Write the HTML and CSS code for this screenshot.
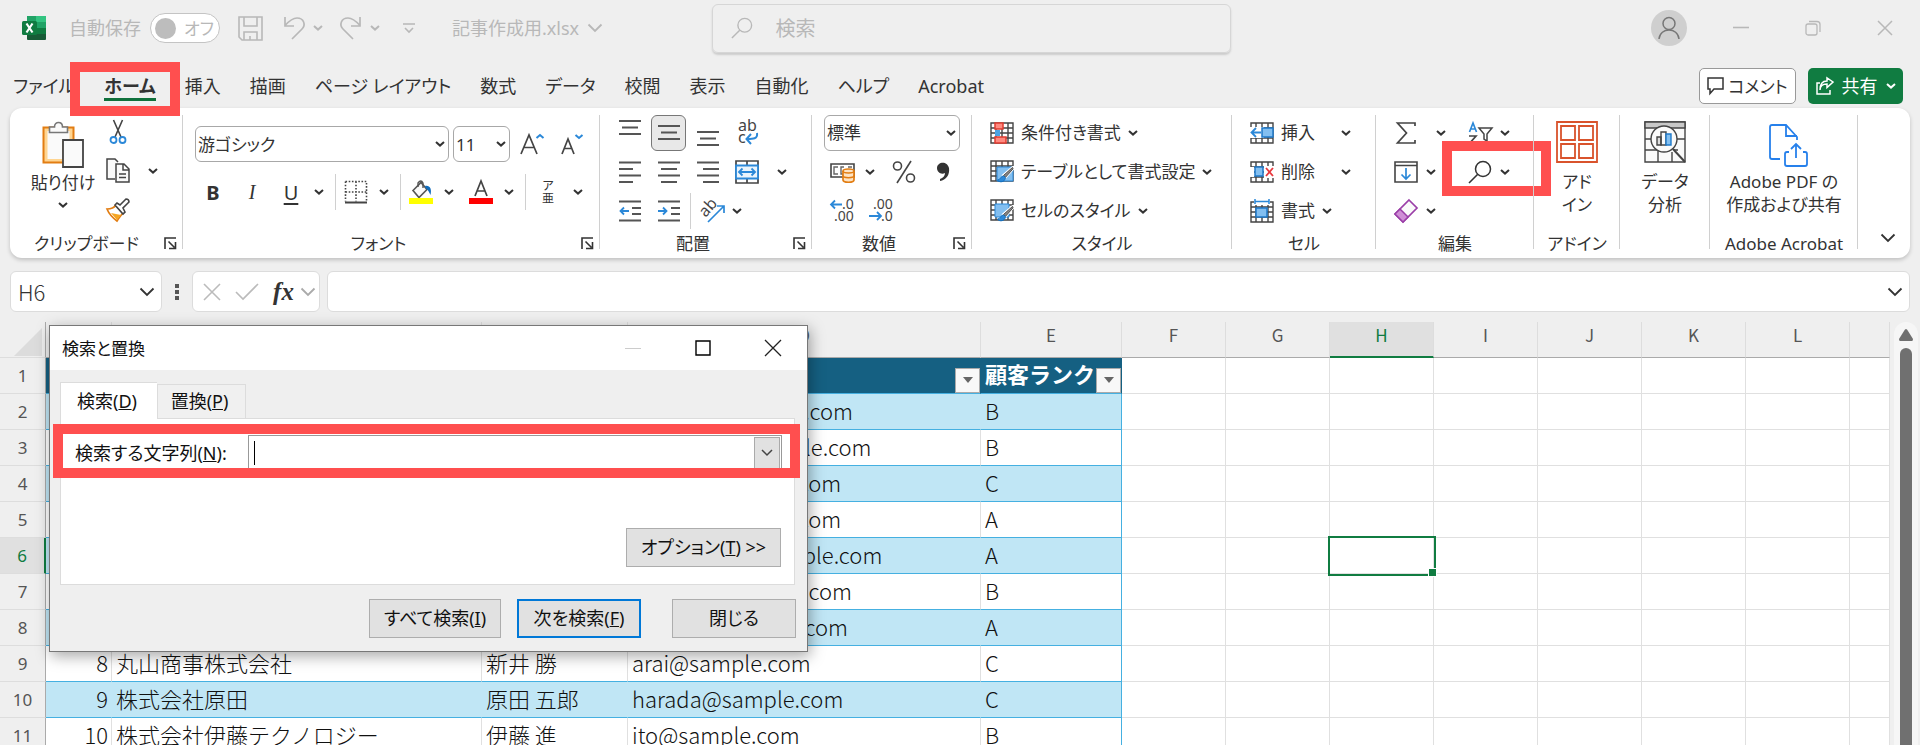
FILE: index.html
```html
<!DOCTYPE html>
<html lang="ja">
<head>
  <meta charset="UTF-8">
  <meta name="viewport" content="width=device-width, initial-scale=1.0">
  <title>記事作成用.xlsx</title>
  <link rel="stylesheet" href="styles.css">
</head>
<body>

  <!-- Shared icons -->
  <svg class="sprite" width="0" height="0">
    <symbol id="chev" viewBox="0 0 10 6"><path d="M1 1l4 3.6L9 1" fill="none" stroke="currentColor" stroke-width="2"/></symbol>
    <symbol id="chev-lg" viewBox="0 0 16 10"><path d="M1.5 1.5L8 8l6.500-6.500" fill="none" stroke="currentColor" stroke-width="1.800"/></symbol>
    <symbol id="launcher" viewBox="0 0 13 13"><path d="M1 12V1h11M4.500 4.500l6 6M11.500 5v6.500H5" fill="none" stroke="#333" stroke-width="1.600"/></symbol>
    <symbol id="glass" viewBox="0 0 24 24"><circle cx="15" cy="9" r="7.500" fill="none" stroke="currentColor" stroke-width="1.500"/><path d="M9.500 14.500L1 23" stroke="currentColor" stroke-width="1.600"/></symbol>
    <symbol id="grid-icon" viewBox="0 0 24 22"><path d="M1 1h22v20H1zM1 6h22M1 11h22M1 16h22M6 1v20M12 1v20M18 1v20" fill="#fff" stroke="#444" stroke-width="1.400"/></symbol>
    <symbol id="brush" viewBox="0 0 18 18"><path d="M17.500 1L7 10l2 2.500L17.500 3z" fill="#777" stroke="#fff" stroke-width="2.500"/><path d="M17 1.500L7.500 10l2 2L17.500 3z" fill="#888" stroke="#444"/><path d="M7.500 10.500c-3 0-3 4-6.500 4.500 2.500 3 8 2 8.500-2.500z" fill="#2b88d8" stroke="#0f6cbd"/></symbol>
  </svg>

  <!-- Title bar -->
  <header class="titlebar">
    <div class="title-left">
      <svg class="excel-logo" width="25" height="26" viewBox="0 0 25 26">
        <path d="M5 1h19v7H5z" fill="#21a366"/><path d="M14 1h10v7H14z" fill="#33c481"/>
        <path d="M5 7h19v7H5z" fill="#107c41"/><path d="M14 7h10v6H14z" fill="#21a366"/>
        <path d="M5 13h19v11q0 1-1 1H6q-1 0-1-1z" fill="#185c37"/><path d="M14 13h10v6H14z" fill="#107c41"/>
        <rect y="6" width="15" height="14" rx="1.500" fill="#107c41"/>
        <path d="M4.500 8.500l6 9M10.500 8.500l-6 9" stroke="#fff" stroke-width="2.200"/>
      </svg>
      <span class="autosave-label">自動保存</span>
      <button class="toggle" type="button"><span class="knob"></span>オフ</button>
      <button class="plain save" type="button" aria-label="上書き保存">
        <svg width="25" height="25" viewBox="0 0 25 25" fill="none" stroke="currentColor" stroke-width="1.600"><path d="M1 1h23v23H4l-3-3zM6 1v9h13V1M6 24v-8h13v8M12 24v-4"/></svg>
      </button>
      <button class="plain undo" type="button" aria-label="元に戻す">
        <svg width="22" height="24" viewBox="0 0 22 24" fill="none" stroke="currentColor" stroke-width="1.700"><path d="M2 1v9h9M2 9.500C7 4 10 2 14 2c7 0 9 7 5 11L9 23"/></svg>
        <svg class="chev"><use href="#chev"/></svg>
      </button>
      <button class="plain redo" type="button" aria-label="やり直し">
        <svg width="22" height="24" viewBox="0 0 22 24" fill="none" stroke="currentColor" stroke-width="1.700"><path d="M20 1v9h-9M20 9.500C15 4 12 2 8 2 1 2-1 9 3 13l10 10"/></svg>
        <svg class="chev"><use href="#chev"/></svg>
      </button>
      <button class="plain customize" type="button" aria-label="クイック アクセス">
        <svg width="12" height="10" viewBox="0 0 12 10" fill="none" stroke="currentColor" stroke-width="1.600"><path d="M0 1h12M2 5l4 4 4-4"/></svg>
      </button>
      <button class="plain filename" type="button">記事作成用.xlsx <svg class="chev-lg"><use href="#chev-lg"/></svg></button>
    </div>
    <label class="search">
      <svg width="22" height="22"><use href="#glass"/></svg>
      <input type="search" placeholder="検索" aria-label="検索">
    </label>
    <div class="window-buttons">
      <button class="avatar" type="button" aria-label="アカウント">
        <svg width="22" height="24" viewBox="0 0 22 24" fill="none" stroke="#777" stroke-width="1.500"><circle cx="11" cy="7.500" r="6"/><path d="M1 23c1-12 19-12 20 0"/></svg>
      </button>
      <button class="plain" type="button" aria-label="最小化"><svg width="16" height="16" viewBox="0 0 16 16"><path d="M0 7.500h16" stroke="currentColor" stroke-width="1.600"/></svg></button>
      <button class="plain" type="button" aria-label="元のサイズ"><svg width="16" height="16" viewBox="0 0 16 16" fill="none" stroke="currentColor" stroke-width="1.300"><rect x="1" y="4" width="11" height="11" rx="2"/><path d="M4 1.500h8q3 0 3 3V12"/></svg></button>
      <button class="plain" type="button" aria-label="閉じる"><svg width="16" height="16" viewBox="0 0 16 16"><path d="M1 1l14 14M15 1L1 15" stroke="currentColor" stroke-width="1.500"/></svg></button>
    </div>
  </header>

  <!-- Ribbon tabs -->
  <nav class="tabs">
    <a href="#">ファイル</a>
    <a href="#" class="active">ホーム</a>
    <a href="#">挿入</a>
    <a href="#">描画</a>
    <a href="#">ページ レイアウト</a>
    <a href="#">数式</a>
    <a href="#">データ</a>
    <a href="#">校閲</a>
    <a href="#">表示</a>
    <a href="#">自動化</a>
    <a href="#">ヘルプ</a>
    <a href="#">Acrobat</a>
    <button class="comment-btn" type="button">
      <svg width="17" height="18" viewBox="0 0 17 18" fill="none" stroke="#333" stroke-width="1.500"><path d="M1 1h15v11H7l-4 4.500V12H1z"/></svg>コメント
    </button>
    <button class="share-btn" type="button">
      <svg width="18" height="18" viewBox="0 0 18 18" fill="none" stroke="#fff" stroke-width="1.500"><path d="M4 6H1v11h13v-4"/><path d="M4 13c0-5 3-6 7-6v3.500L17 5l-6-4v3C6 4 4 8 4 13z"/></svg>共有
      <svg class="chev"><use href="#chev"/></svg>
    </button>
  </nav>

  <!-- Ribbon -->
  <section class="ribbon">

    <div class="group g-clipboard">
      <div class="body">
        <button class="plain big" type="button">
          <svg width="42" height="43" viewBox="0 0 42 43">
            <path d="M1.500 6.500h30v13H22v22H1.500z" fill="#ffd591" stroke="#e27d12" stroke-width="2"/>
            <path d="M5.500 10h22v10H20v18H5.500z" fill="#fafafa"/>
            <path d="M7.500 11.500V6h5c0-6 8-6 8 0h5v5.500z" fill="#fafafa" stroke="#777" stroke-width="1.600"/>
            <path d="M21 19h20v27H21z" fill="#fafafa" stroke="#444" stroke-width="1.800"/>
          </svg>
          <span>貼り付け</span>
          <svg class="chev"><use href="#chev"/></svg>
        </button>
        <div class="rows">
          <div class="row"><button class="plain ic" type="button" aria-label="切り取り">
            <svg width="24" height="26" viewBox="0 0 24 26" fill="none"><path d="M7.500 1l7.500 17M16.500 1L9 18" stroke="#444" stroke-width="1.600"/><circle cx="7.500" cy="21" r="3" stroke="#2b88d8" stroke-width="1.800"/><circle cx="16.500" cy="21" r="3" stroke="#2b88d8" stroke-width="1.800"/></svg></button></div>
          <div class="row"><div class="split wide"><button class="plain ic" type="button" aria-label="コピー">
            <svg width="24" height="25" viewBox="0 0 24 25" fill="#fafafa" stroke="#444" stroke-width="1.500"><path d="M9 21H1V1h8l3 3"/><path d="M10 6h8l5 5v13H10zM17 6v6h6M13 16h7M13 19.500h7"/></svg></button>
            <button class="plain cb" type="button" aria-label="コピーのオプション"><svg class="chev"><use href="#chev"/></svg></button></div></div>
          <div class="row"><button class="plain ic" type="button" aria-label="書式のコピー">
            <svg width="24" height="24" viewBox="0 0 24 24"><path d="M1 11c4 0 7-1 9-4l7 8c-2 2-4 5-6 8C7 20 3 16 1 11z" fill="#fff" stroke="#e27d12" stroke-width="1.700"/><path d="M5 15l10 2-4 5z" fill="#f5a623"/><path d="M9 7l2-2 3 2 6-6q3 0 3 3l-6 6 2 4-2 2z" fill="#fff" stroke="#444" stroke-width="1.600"/></svg></button></div>
        </div>
      </div>
      <div class="caption"><span>クリップボード</span><button class="plain" type="button" aria-label="クリップボードの設定"><svg class="launcher"><use href="#launcher"/></svg></button></div>
    </div>

    <div class="group g-font">
      <div class="body">
        <div class="font-row">
          <span class="combo font-name"><select aria-label="フォント"><option>游ゴシック</option></select><svg class="chev"><use href="#chev"/></svg></span>
          <span class="combo font-size"><select aria-label="フォント サイズ"><option>11</option></select><svg class="chev"><use href="#chev"/></svg></span>
          <button class="plain ic grow" type="button" aria-label="拡大"><svg width="24" height="24" viewBox="0 0 24 24" fill="none"><path d="M1 22L9 3l8 19M4 15.500h10" stroke="#444" stroke-width="1.700"/><path d="M16.500 6l3.500-3 3.500 3" stroke="#2b88d8" stroke-width="2"/></svg></button>
          <button class="plain ic shrink" type="button" aria-label="縮小"><svg width="24" height="24" viewBox="0 0 24 24" fill="none"><path d="M0 22L6 7l6 15M2.500 16.500h7" stroke="#444" stroke-width="1.700"/><path d="M13.500 3l3.500 3 3.500-3" stroke="#2b88d8" stroke-width="2"/></svg></button>
        </div>
        <div class="font-row">
          <button class="plain ic letter bold" type="button">B</button>
          <button class="plain ic letter italic" type="button">I</button>
          <div class="split"><button class="plain ic letter under" type="button">U</button><button class="plain cb" type="button" aria-label="下線の種類"><svg class="chev"><use href="#chev"/></svg></button></div>
          <i class="sep"></i>
          <div class="split"><button class="plain ic" type="button" aria-label="罫線"><svg width="24" height="24" viewBox="0 0 24 24" fill="none" stroke="#444"><path d="M1.500 1.500h21v20M1.500 1.500v20M12 1.500v20M1.500 12h21" stroke-width="1.600" stroke-dasharray="1.600 1.600"/><path d="M1 22.500h22" stroke-width="2"/></svg></button><button class="plain cb" type="button" aria-label="罫線の種類"><svg class="chev"><use href="#chev"/></svg></button></div>
          <i class="sep"></i>
          <div class="split"><button class="plain ic" type="button" aria-label="塗りつぶしの色"><svg width="24" height="24" viewBox="0 0 24 24"><path d="M4 10.500l8-8 6 7-8 8z" fill="#fafafa" stroke="#555" stroke-width="1.600"/><path d="M9 7V3q3-4 5 0v5" fill="none" stroke="#555" stroke-width="1.400"/><path d="M16 6c5-1 7 3 5.500 9-1.500-3-2-5-5-7z" fill="#0f6cbd"/><path d="M0 18h24v6H0z" fill="#ff0"/></svg></button><button class="plain cb" type="button" aria-label="塗りつぶしの色の選択"><svg class="chev"><use href="#chev"/></svg></button></div>
          <div class="split second"><button class="plain ic" type="button" aria-label="フォントの色"><svg width="24" height="24" viewBox="0 0 24 24"><path d="M6 16l6-15 6 15M8 11h8" fill="none" stroke="#444" stroke-width="1.700"/><path d="M0 18h24v6H0z" fill="red"/></svg></button><button class="plain cb" type="button" aria-label="フォントの色の選択"><svg class="chev"><use href="#chev"/></svg></button></div>
          <i class="sep"></i>
          <div class="split"><button class="plain ic ruby" type="button"><span>ア</span><span>亜</span></button><button class="plain cb" type="button" aria-label="ふりがな"><svg class="chev"><use href="#chev"/></svg></button></div>
        </div>
      </div>
      <div class="caption"><span>フォント</span><button class="plain" type="button" aria-label="フォントの設定"><svg class="launcher"><use href="#launcher"/></svg></button></div>
    </div>

    <div class="group g-align">
      <div class="body rows">
        <div class="row">
          <button class="plain al" type="button" aria-label="上揃え"><svg width="22" height="36" viewBox="0 0 22 36" stroke="#555" stroke-width="1.800"><path d="M0 6h22M3 12.500h16M0 19h22"/></svg></button>
          <button class="plain al on" type="button" aria-label="上下中央揃え"><svg width="22" height="36" viewBox="0 0 22 36" stroke="#555" stroke-width="1.800"><path d="M0 11h22M3 17.500h16M0 24h22"/></svg></button>
          <button class="plain al" type="button" aria-label="下揃え"><svg width="22" height="36" viewBox="0 0 22 36" stroke="#555" stroke-width="1.800"><path d="M0 17h22M3 23.500h16M0 30h22"/></svg></button>
          <button class="plain al" type="button" aria-label="折り返して全体を表示する"><svg width="24" height="26" viewBox="0 0 24 26"><text class="svg-text" x="3" y="11" font-size="16">ab</text><text class="svg-text" x="3" y="23" font-size="16">c</text><path d="M22 13c1 6-4 6-10 6M16 14l-4.500 5 4.500 5" fill="none" stroke="#2b88d8" stroke-width="2"/></svg></button>
        </div>
        <div class="row">
          <button class="plain al" type="button" aria-label="左揃え"><svg width="22" height="22" viewBox="0 0 22 22" stroke="#555" stroke-width="1.800"><path d="M0 1.500h22M0 8h14M0 14.500h22M0 21h14"/></svg></button>
          <button class="plain al" type="button" aria-label="中央揃え"><svg width="22" height="22" viewBox="0 0 22 22" stroke="#555" stroke-width="1.800"><path d="M0 1.500h22M3 8h16M0 14.500h22M3 21h16"/></svg></button>
          <button class="plain al" type="button" aria-label="右揃え"><svg width="22" height="22" viewBox="0 0 22 22" stroke="#555" stroke-width="1.800"><path d="M0 1.500h22M6 8h16M0 14.500h22M6 21h16"/></svg></button>
          <button class="plain al" type="button" aria-label="セルを結合して中央揃え"><svg width="24" height="24" viewBox="0 0 24 24" fill="none"><path d="M1 1h22v22H1zM12 1v4M12 19v4" stroke="#444" stroke-width="1.700"/><path d="M1 5.500h22v13H1z" fill="#eaf4fc" stroke="#2b88d8" stroke-width="1.800"/><path d="M4 12h16M7.500 8.500L4 12l3.500 3.500M16.500 8.500L20 12l-3.500 3.500" stroke="#2b88d8" stroke-width="1.800"/></svg></button>
          <button class="plain cb merge-more" type="button" aria-label="結合のオプション"><svg class="chev"><use href="#chev"/></svg></button>
        </div>
        <div class="row">
          <button class="plain al" type="button" aria-label="インデントを減らす"><svg width="22" height="22" viewBox="0 0 22 22" fill="none" stroke="#555" stroke-width="1.800"><path d="M0 1.500h22M13 8h9M13 14h9M0 20.500h22"/><path d="M10 11H1.500M5 7.500L1.500 11 5 14.500" stroke="#2b88d8"/></svg></button>
          <button class="plain al" type="button" aria-label="インデントを増やす"><svg width="22" height="22" viewBox="0 0 22 22" fill="none" stroke="#555" stroke-width="1.800"><path d="M0 1.500h22M13 8h9M13 14h9M0 20.500h22"/><path d="M0 11h8.500M5 7.500L8.500 11 5 14.500" stroke="#2b88d8"/></svg></button>
          <i class="sep"></i>
          <div class="split"><button class="plain ic" type="button" aria-label="方向"><svg width="25" height="24" viewBox="0 0 25 24"><text class="svg-text" x="2" y="17" font-size="16" transform="rotate(-48 6 14)">ab</text><path d="M8 23L24 7M17 7h7v7" fill="none" stroke="#2b88d8" stroke-width="1.700"/></svg></button><button class="plain cb" type="button" aria-label="方向のオプション"><svg class="chev"><use href="#chev"/></svg></button></div>
        </div>
      </div>
      <div class="caption"><span>配置</span><button class="plain" type="button" aria-label="配置の設定"><svg class="launcher"><use href="#launcher"/></svg></button></div>
    </div>

    <div class="group g-number">
      <div class="body rows">
        <div class="row"><span class="combo number-format"><select aria-label="表示形式"><option>標準</option></select><svg class="chev"><use href="#chev"/></svg></span></div>
        <div class="row inset">
          <div class="split"><button class="plain ic" type="button" aria-label="通貨表示形式"><svg width="25" height="22" viewBox="0 0 25 22" fill="none"><path d="M1 3h23v13H1z" stroke="#444" stroke-width="1.600"/><path d="M8 6H4v7h4M14 6h-3v7h2M18 6h4" stroke="#666" stroke-width="1.400"/><path d="M13 10v9c0 3 11 3 11 0v-9" fill="#fde3c4" stroke="#e27d12" stroke-width="1.700"/><ellipse cx="18.500" cy="10" rx="5.500" ry="2" fill="#fde3c4" stroke="#e27d12" stroke-width="1.600"/><path d="M13 14.500c0 3 11 3 11 0" stroke="#e27d12" stroke-width="1.600"/></svg></button><button class="plain cb currency-more" type="button" aria-label="通貨の選択"><svg class="chev"><use href="#chev"/></svg></button></div>
          <button class="plain percent" type="button" aria-label="パーセント スタイル"><svg width="24" height="24" viewBox="0 0 24 24" fill="none" stroke="#444" stroke-width="1.600"><circle cx="5.500" cy="6" r="4"/><circle cx="18.500" cy="18" r="4"/><path d="M19 1L5 23"/></svg></button>
          <button class="plain comma" type="button" aria-label="桁区切りスタイル"><svg width="14" height="20" viewBox="0 0 14 20"><path d="M13 6c1 7-3 12-9 13v-2c3-1 5-3 5-6-4 2-8-1-8-5 0-6 10-8 12 0z" fill="#333"/></svg></button>
        </div>
        <div class="row inset decimals">
          <button class="plain" type="button" aria-label="小数点以下の表示桁数を増やす"><svg width="26" height="26" viewBox="0 0 26 26"><text class="svg-text" x="12" y="11" font-size="14">.0</text><text class="svg-text" x="4" y="23" font-size="14">.00</text><path d="M12 6.500H1M5 2.500l-4 4 4 4" fill="none" stroke="#2b88d8" stroke-width="1.800"/></svg></button>
          <button class="plain" type="button" aria-label="小数点以下の表示桁数を減らす"><svg width="26" height="26" viewBox="0 0 26 26"><text class="svg-text" x="4" y="11" font-size="14">.00</text><text class="svg-text" x="12" y="23" font-size="14">.0</text><path d="M0 18h12M8 14l4 4-4 4" fill="none" stroke="#2b88d8" stroke-width="1.800"/></svg></button>
        </div>
      </div>
      <div class="caption"><span>数値</span><button class="plain" type="button" aria-label="数値の設定"><svg class="launcher"><use href="#launcher"/></svg></button></div>
    </div>

    <div class="group g-style">
      <div class="body rows">
        <div class="row"><button class="plain text-btn" type="button"><svg width="24" height="22" viewBox="0 0 24 22"><use href="#grid-icon" width="24" height="22"/><path d="M5 1h8v6H5zM5 15h11v6H5z" fill="#ff8a80" stroke="#e03c31" stroke-width="1.500"/><path d="M5 8h5v6H5z" fill="#4ba3e3"/></svg>条件付き書式<svg class="chev"><use href="#chev"/></svg></button></div>
        <div class="row"><button class="plain text-btn" type="button"><svg width="24" height="23" viewBox="0 0 24 23"><use href="#grid-icon" width="24" height="22"/><path d="M7 7h16v14H7z" fill="#83bff0" stroke="#2b88d8"/><use href="#brush" x="6" y="6" width="18" height="17"/></svg>テーブルとして書式設定<svg class="chev"><use href="#chev"/></svg></button></div>
        <div class="row"><button class="plain text-btn" type="button"><svg width="24" height="23" viewBox="0 0 24 23"><use href="#grid-icon" width="24" height="22"/><path d="M5 5h14v13H5z" fill="#83bff0" stroke="#2b88d8"/><use href="#brush" x="6" y="6" width="18" height="17"/></svg>セルのスタイル<svg class="chev"><use href="#chev"/></svg></button></div>
      </div>
      <div class="caption"><span>スタイル</span></div>
    </div>

    <div class="group g-cell">
      <div class="body rows">
        <div class="row"><button class="plain text-btn spread" type="button"><svg width="24" height="22" viewBox="0 0 24 22"><use href="#grid-icon" width="24" height="22"/><path d="M0 5h14v11H0z" fill="#fff"/><path d="M12 6h11v9H12z" fill="#83bff0" stroke="#1f7ac9" stroke-width="1.500"/><path d="M11 10.500H1.500M6 6l-4.500 4.500L6 15" fill="none" stroke="#2b88d8" stroke-width="1.800"/></svg>挿入<svg class="chev"><use href="#chev"/></svg></button></div>
        <div class="row"><button class="plain text-btn spread" type="button"><svg width="24" height="22" viewBox="0 0 24 22"><use href="#grid-icon" width="24" height="22"/><path d="M0 6h4v10H0zM14 5h10v12H14z" fill="#fff"/><path d="M5 6h8v9H5z" fill="#83bff0" stroke="#1f7ac9" stroke-width="1.500"/><path d="M16 7l7 8M23 7l-7 8" stroke="#e8383d" stroke-width="1.800"/></svg>削除<svg class="chev"><use href="#chev"/></svg></button></div>
        <div class="row"><button class="plain text-btn" type="button"><svg width="24" height="24" viewBox="0 0 24 24"><use href="#grid-icon" y="2" width="24" height="22"/><path d="M4 0h16v6H4z" fill="#fff"/><path d="M6 9h11v9H6z" fill="#83bff0" stroke="#1f7ac9" stroke-width="1.500"/><path d="M5 0v5M19 0v5M5 2.500h14" stroke="#2b88d8" stroke-width="1.500"/></svg>書式<svg class="chev"><use href="#chev"/></svg></button></div>
      </div>
      <div class="caption"><span>セル</span></div>
    </div>

    <div class="group g-edit">
      <div class="body rows">
        <div class="row">
          <div class="split wide"><button class="plain ic" type="button" aria-label="オート SUM"><svg width="24" height="22" viewBox="0 0 24 22"><path d="M21 4V1H3.500l9 10-9 10H21v-3" fill="none" stroke="#444" stroke-width="1.700"/></svg></button><button class="plain cb" type="button" aria-label="集計の種類"><svg class="chev"><use href="#chev"/></svg></button></div>
          <div class="split"><button class="plain ic" type="button" aria-label="並べ替えとフィルター"><svg width="25" height="24" viewBox="0 0 25 24" fill="none"><path d="M1.500 11L5 2l3.500 9M3 8h4" stroke="#2b88d8" stroke-width="1.700"/><path d="M1 15h7l-7 8h7" stroke="#444" stroke-width="1.700"/><path d="M11 7h13l-5 6v7l-3-2v-5z" stroke="#444" stroke-width="1.500"/></svg></button><button class="plain cb" type="button" aria-label="並べ替えの種類"><svg class="chev"><use href="#chev"/></svg></button></div>
        </div>
        <div class="row">
          <div class="split"><button class="plain ic" type="button" aria-label="フィル"><svg width="24" height="22" viewBox="0 0 24 22" fill="none"><path d="M1 1h22v20H1zM1 4.500h22" stroke="#444" stroke-width="1.600"/><path d="M12 7v11M7.500 13.500L12 18l4.500-4.500" stroke="#2b88d8" stroke-width="1.700"/></svg></button><button class="plain cb" type="button" aria-label="フィルの種類"><svg class="chev"><use href="#chev"/></svg></button></div>
          <div class="split"><button class="plain ic" type="button" aria-label="検索と選択"><svg width="24" height="24"><use href="#glass"/></svg></button><button class="plain cb" type="button" aria-label="検索の種類"><svg class="chev"><use href="#chev"/></svg></button></div>
          <div class="mark mark-find"></div>
        </div>
        <div class="row">
          <div class="split"><button class="plain ic" type="button" aria-label="クリア"><svg width="24" height="24" viewBox="0 0 24 24"><path d="M15 1l8 8L9 23l-8-8z" fill="#fafafa" stroke="#9b3fa8" stroke-width="1.700"/><path d="M6 10l8 8-5 5-8-8z" fill="#cf8fd6" stroke="#9b3fa8" stroke-width="1.500"/></svg></button><button class="plain cb" type="button" aria-label="クリアの種類"><svg class="chev"><use href="#chev"/></svg></button></div>
        </div>
      </div>
      <div class="caption"><span>編集</span></div>
    </div>

    <div class="group g-addin">
      <div class="body"><button class="plain big" type="button"><svg width="42" height="42" viewBox="0 0 42 42" fill="none" stroke="#d9532c" stroke-width="1.800"><path d="M1 1h40v40H1zM5 5h14v14H5zM23 5h14v14H23zM5 23h14v14H5zM23 23h14v14H23z"/></svg><span>アド<br>イン</span></button></div>
      <div class="caption"><span>アドイン</span></div>
    </div>

    <div class="group g-data">
      <div class="body"><button class="plain big" type="button"><svg width="42" height="42" viewBox="0 0 42 42" fill="none" stroke="#444" stroke-width="1.400"><path d="M1 1h40v40H1z" fill="#fafafa"/><path d="M1 1h40v6H1z" fill="#c8c8c8"/><path d="M1 18h6M33 18h8M1 29h12M14 29v12M28 31v10M30 29h4"/><circle cx="20" cy="18" r="13" fill="#fafafa"/><path d="M29 28l12 13" stroke-width="2"/><path d="M13 16h4v8h-4z" fill="#ddd"/><path d="M17 11h5v13h-5z"/><path d="M22 13h5v11h-5z" fill="#83bff0" stroke="#1f7ac9"/></svg><span>データ<br>分析</span></button></div>
      <div class="caption"></div>
    </div>

    <div class="group g-adobe">
      <div class="body"><button class="plain big" type="button"><svg width="42" height="42" viewBox="0 0 42 42" fill="none" stroke="#2680eb" stroke-width="1.800"><path d="M17 38H9q-2 0-2-2V6q0-2 2-2h14l11 12v3M23 4v11h11"/><path d="M26 31h-2q-2 0-2 2v10q0 2 2 2h18q2 0 2-2V33q0-2-2-2h-2M33 37V24M28 28l5-5 5 5"/></svg><span>Adobe PDF の<br>作成および共有</span></button></div>
      <div class="caption"><span>Adobe Acrobat</span></div>
    </div>

    <button class="plain collapse" type="button" aria-label="リボンを折りたたむ"><svg class="chev-lg"><use href="#chev-lg"/></svg></button>
  </section>

  <!-- Formula bar -->
  <section class="formula-bar">
    <label class="name-box"><input type="text" value="H6" aria-label="名前ボックス"><svg class="chev-lg"><use href="#chev-lg"/></svg></label>
    <svg class="dots" width="4" height="18" viewBox="0 0 4 18"><path d="M0 1h4v4H0zM0 7h4v4H0zM0 13h4v4H0z" fill="#555"/></svg>
    <div class="fx-box">
      <button class="plain" type="button" aria-label="キャンセル"><svg width="18" height="18" viewBox="0 0 18 18"><path d="M1 1l16 16M17 1L1 17" stroke="#bbb" stroke-width="1.600"/></svg></button>
      <button class="plain" type="button" aria-label="入力"><svg width="24" height="17" viewBox="0 0 24 17"><path d="M1 9l7 7L23 1" fill="none" stroke="#bbb" stroke-width="1.600"/></svg></button>
      <button class="plain fx" type="button">fx</button>
      <svg class="chev-lg pale"><use href="#chev-lg"/></svg>
    </div>
    <label class="formula"><input type="text" aria-label="数式バー"><svg class="chev-lg"><use href="#chev-lg"/></svg></label>
  </section>

  <!-- Worksheet -->
  <main class="sheet">
    <table>
      <colgroup>
        <col class="c-head"><col class="c-a"><col class="c-b"><col class="c-c"><col class="c-d"><col class="c-e">
        <col class="c-std"><col class="c-std"><col class="c-std"><col class="c-std"><col class="c-std"><col class="c-std"><col class="c-std"><col>
      </colgroup>
      <thead>
        <tr>
          <th class="corner"><svg width="28" height="28" viewBox="0 0 28 28"><path d="M28 0v28H0z" fill="#dcdcdc"/></svg></th>
          <th>A</th><th>B</th><th>C</th><th>D</th><th>E</th><th>F</th><th>G</th><th class="current">H</th><th>I</th><th>J</th><th>K</th><th>L</th><th></th>
        </tr>
      </thead>
      <tbody>
        <tr class="table-head"><th>1</th><td></td><td></td><td></td>
          <td><div class="head-cell"><span></span><button class="filter" type="button" aria-label="フィルター"></button></div></td>
          <td><div class="head-cell"><span>顧客ランク</span><button class="filter" type="button" aria-label="フィルター"></button></div></td>
          <td></td><td></td><td></td><td></td><td></td><td></td><td></td><td></td></tr>
        <tr class="band"><th>2</th><td>1</td><td></td><td></td><td>aoyama@sample.com</td><td>B</td><td></td><td></td><td></td><td></td><td></td><td></td><td></td><td></td></tr>
        <tr><th>3</th><td>2</td><td></td><td></td><td>watanabe@sample.com</td><td>B</td><td></td><td></td><td></td><td></td><td></td><td></td><td></td><td></td></tr>
        <tr class="band"><th>4</th><td>3</td><td></td><td></td><td>tanaka@sample.com</td><td>C</td><td></td><td></td><td></td><td></td><td></td><td></td><td></td><td></td></tr>
        <tr><th>5</th><td>4</td><td></td><td></td><td>nagata@sample.com</td><td>A</td><td></td><td></td><td></td><td></td><td></td><td></td><td></td><td></td></tr>
        <tr class="band"><th class="current">6</th><td>5</td><td></td><td></td><td>yamaguchi@sample.com</td><td>A</td><td></td><td></td><td class="selected"></td><td></td><td></td><td></td><td></td><td></td></tr>
        <tr><th>7</th><td>6</td><td></td><td></td><td>nomura@sample.com</td><td>B</td><td></td><td></td><td></td><td></td><td></td><td></td><td></td><td></td></tr>
        <tr class="band"><th>8</th><td>7</td><td></td><td></td><td>nakano@sample.com</td><td>A</td><td></td><td></td><td></td><td></td><td></td><td></td><td></td><td></td></tr>
        <tr><th>9</th><td>8</td><td>丸山商事株式会社</td><td>新井 勝</td><td>arai@sample.com</td><td>C</td><td></td><td></td><td></td><td></td><td></td><td></td><td></td><td></td></tr>
        <tr class="band"><th>10</th><td>9</td><td>株式会社原田</td><td>原田 五郎</td><td>harada@sample.com</td><td>C</td><td></td><td></td><td></td><td></td><td></td><td></td><td></td><td></td></tr>
        <tr><th>11</th><td>10</td><td>株式会社伊藤テクノロジー</td><td>伊藤 進</td><td>ito@sample.com</td><td>B</td><td></td><td></td><td></td><td></td><td></td><td></td><td></td><td></td></tr>
      </tbody>
    </table>
    <div class="scrollbar">
      <svg width="14" height="12" viewBox="0 0 14 12"><path d="M7 0q1 0 2 2l5 8q0 2-1 2H1q-1 0-1-2l5-8q1-2 2-2z" fill="#707070"/></svg>
      <div class="thumb"></div>
    </div>
  </main>

  <!-- Find and replace dialog -->
  <div class="dialog" role="dialog" aria-labelledby="dialogTitle">
    <div class="dialog-title">
      <span id="dialogTitle">検索と置換</span>
      <svg width="16" height="16" viewBox="0 0 16 16"><path d="M0 8.500h16" stroke="#ccc"/></svg>
      <button class="plain" type="button" aria-label="最大化"><svg width="16" height="16" viewBox="0 0 16 16"><path d="M1 1h14v14H1z" fill="none" stroke="#000" stroke-width="1.400"/></svg></button>
      <button class="plain" type="button" aria-label="ダイアログを閉じる"><svg width="16" height="16" viewBox="0 0 16 16"><path d="M0 0l16 16M16 0L0 16" stroke="#222" stroke-width="1.300"/></svg></button>
    </div>
    <div class="dialog-tabs">
      <button class="active" type="button">検索(<u>D</u>)</button>
      <button type="button">置換(<u>P</u>)</button>
    </div>
    <div class="panel">
      <div class="field">
        <label for="findText">検索する文字列(<u>N</u>):</label>
        <div class="find-box">
          <i class="caret"></i><input id="findText" type="text">
          <button type="button" aria-label="履歴"><svg width="12" height="8" viewBox="0 0 12 8"><path d="M1 1l5 5 5-5" fill="none" stroke="#444" stroke-width="1.500"/></svg></button>
        </div>
        <div class="mark mark-field"></div>
      </div>
      <button class="dlg-btn options" type="button">オプション(<u>T</u>) &gt;&gt;</button>
    </div>
    <div class="dialog-actions">
      <button class="dlg-btn all" type="button">すべて検索(<u>I</u>)</button>
      <button class="dlg-btn default" type="button">次を検索(<u>F</u>)</button>
      <button class="dlg-btn close" type="button">閉じる</button>
    </div>
  </div>

  <div class="mark mark-home"></div>

</body>
</html>
```

FILE: styles.css
```css
* {
  box-sizing: border-box;
}

body {
  position: relative;
  display: flex;
  flex-direction: column;
  height: 100vh;
  margin: 0;
  overflow: hidden;
  background-color: #efefef;
  color: #333;
  font-family: "Noto Sans", "Noto Sans CJK JP", sans-serif;
  font-size: 17px;
  line-height: 23px;
  font-feature-settings: "palt";
}

button, input, select {
  font: inherit;
  font-feature-settings: inherit;
  color: inherit;
}

svg {
  display: block;
  flex: none;
  overflow: visible;
}

.sprite {
  position: absolute;
}

.plain {
  display: flex;
  align-items: center;
  justify-content: center;
  padding: 0;
  border: none;
  background: none;
}

.chev {
  width: 10px;
  height: 6px;
}

.chev-lg {
  width: 16px;
  height: 10px;
}

.launcher {
  width: 13px;
  height: 13px;
}

.svg-text {
  font-family: "Noto Sans", sans-serif;
  fill: #444;
}

/* Red highlight frames */
.mark {
  position: absolute;
  border: 10px solid #ff4f4f;
  pointer-events: none;
}

.mark-home {
  left: 70px;
  top: 62px;
  width: 110px;
  height: 54px;
}

.mark-find {
  left: 48px;
  top: -11px;
  width: 109px;
  height: 55px;
}

.mark-field {
  left: -8px;
  top: 5px;
  width: 747px;
  height: 54px;
}

/* Title bar */
.titlebar {
  display: grid;
  grid-template-columns: 37% 27% 1fr;
  align-items: center;
  height: 56px;
  color: #b8b8b8;
  font-size: 18px;
}

.title-left {
  display: flex;
  align-items: center;
  padding-left: 22px;
}

.autosave-label {
  width: 72px;
  margin: 0 9px 0 22px;
}

.toggle {
  display: flex;
  align-items: center;
  gap: 8px;
  width: 70px;
  height: 30px;
  padding: 0 4px;
  border: 1px solid #c4c4c4;
  border-radius: 15px;
  background-color: #fff;
  font-size: 17px;
  white-space: nowrap;
}

.knob {
  flex: none;
  width: 21px;
  height: 21px;
  border-radius: 50%;
  background-color: #bdbdbd;
}

.save {
  margin-left: 18px;
}

.undo, .redo {
  gap: 8px;
}

.undo {
  margin-left: 20px;
}

.redo {
  margin-left: 17px;
}

.customize {
  margin-left: 23px;
}

.filename {
  gap: 8px;
  margin-left: 37px;
}

.search {
  display: flex;
  align-items: center;
  gap: 20px;
  height: 49px;
  margin-left: 2px;
  margin-right: -2px;
  padding: 0 18px;
  border: 1px solid #d6d6d6;
  border-radius: 6px;
  box-shadow: 0 2px 2px #ccc;
  font-size: 20px;
}

.search input {
  flex: 1;
  border: none;
  background: none;
}

.search input::placeholder {
  color: #b8b8b8;
}

.window-buttons {
  display: flex;
  align-items: center;
  justify-content: flex-end;
  gap: 56px;
  padding-right: 27px;
}

.avatar {
  display: flex;
  align-items: center;
  justify-content: center;
  width: 36px;
  height: 36px;
  margin-right: -10px;
  padding: 0;
  border: none;
  border-radius: 50%;
  background-color: #cfcfcf;
}

/* Ribbon tabs */
.tabs {
  display: flex;
  align-items: center;
  gap: 29px;
  height: 52px;
  padding: 8px 17px 0 13px;
  font-size: 18px;
}

.tabs a {
  color: #333;
  text-decoration: none;
  white-space: nowrap;
}

.tabs .active {
  padding-top: 4px;
  border-bottom: 3px solid #0f703b;
  font-weight: bold;
}

.comment-btn, .share-btn {
  display: flex;
  align-items: center;
  justify-content: center;
  height: 36px;
  padding: 0;
  border-radius: 5px;
}

.comment-btn {
  gap: 4px;
  width: 97px;
  margin-left: auto;
  border: 1px solid #999;
  background-color: #fff;
  font-size: 17px;
}

.share-btn {
  gap: 8px;
  width: 95px;
  margin-left: -17px;
  border: none;
  background-color: #107c41;
  color: #fff;
}

/* Ribbon */
.ribbon {
  display: flex;
  margin: 0 10px;
  padding: 4px 0;
  border-radius: 12px;
  background-color: #fff;
  box-shadow: 0 2px 4px rgba(0, 0, 0, 0.2);
}

.group {
  display: flex;
  flex-direction: column;
  position: relative;
  flex: none;
}

.group::after {
  content: "";
  position: absolute;
  right: 0;
  top: 3px;
  bottom: 5px;
  width: 1px;
  background-color: #d0d0d0;
}

.g-clipboard { width: 173px; }
.g-font { width: 417px; }
.g-align { width: 212px; }
.g-number { width: 160px; }
.g-style { width: 260px; }
.g-cell { width: 144px; }
.g-edit { width: 158px; }
.g-addin { width: 86px; }
.g-data { width: 90px; }
.g-adobe { width: 148px; }

.body {
  height: 120px;
}

.body.rows {
  padding-top: 1px;
}

.row {
  display: flex;
  align-items: center;
  height: 39px;
}

.caption {
  display: flex;
  align-items: center;
  height: 22px;
}

.caption span {
  flex: 1;
  text-align: center;
}

.caption button {
  width: 26px;
}

.ic {
  width: 24px;
  height: 26px;
}

.cb {
  width: 26px;
  height: 26px;
}

.split {
  display: flex;
}

.split.wide {
  gap: 10px;
}

.sep {
  width: 1px;
  height: 36px;
  background-color: #d0d0d0;
}

.big {
  flex-direction: column;
  justify-content: flex-start;
  width: 100%;
  padding-top: 9px;
}

.big span {
  margin-top: 7px;
}

.g-clipboard .body {
  display: flex;
}

.g-clipboard .big {
  width: 96px;
  padding-left: 10px;
}

.g-clipboard .big .chev {
  margin-top: 8px;
}

.g-clipboard .caption {
  padding-left: 6px;
}

.combo {
  display: grid;
  align-items: center;
  height: 36px;
}

.combo select {
  grid-area: 1 / 1;
  width: 100%;
  height: 36px;
  padding: 0 2px;
  border: 1px solid #a8a8a8;
  border-radius: 6px;
  background-color: #fff;
  appearance: none;
}

.combo .chev {
  grid-area: 1 / 1;
  justify-self: end;
  margin-right: 4px;
  pointer-events: none;
}

.g-font .body {
  display: flex;
  flex-direction: column;
  gap: 12px;
  padding: 14px 0 0 12px;
}

.font-row {
  display: flex;
  align-items: center;
  height: 36px;
}

.font-row .cb {
  width: 32px;
}

.font-row .sep {
  margin-right: 8px;
}

.font-name {
  width: 254px;
}

.font-size {
  width: 57px;
  margin-left: 4px;
}

.grow {
  margin-left: 10px;
}

.shrink {
  margin-left: 18px;
}

.letter {
  margin-left: 6px;
  margin-right: 9px;
  font-size: 20px;
}

.split .letter {
  margin-right: 0;
}

.bold {
  font-weight: bold;
}

.italic {
  font-family: "Liberation Serif", serif;
  font-style: italic;
}

.under {
  text-decoration: underline;
  text-underline-offset: 3px;
}

.second {
  margin-left: 4px;
}

.ruby {
  flex-direction: column;
  font-size: 12px;
  line-height: 13px;
}

.font-row .ruby {
  width: 28px;
}

.g-align .body {
  padding-left: 10px;
}

.al {
  width: 39px;
  height: 36px;
}

.al.on {
  width: 35px;
  margin: 0 2px;
  border: 1px solid #777;
  border-radius: 6px;
  background-color: #e8e8e8;
}

.merge-more {
  width: 32px;
}

.g-align .sep {
  margin: 0 9px 0 2px;
}

.g-number .body {
  padding-left: 12px;
}

.number-format {
  width: 136px;
}

.inset {
  padding-left: 6px;
}

.currency-more {
  width: 32px;
}

.percent {
  margin-left: 6px;
}

.comma {
  margin-left: 20px;
}

.decimals {
  gap: 13px;
}

.g-style .body, .g-cell .body, .g-edit .body {
  padding-left: 18px;
}

.text-btn {
  gap: 7px;
  white-space: nowrap;
}

.spread .chev {
  margin-left: 19px;
}

.g-edit .row {
  position: relative;
  justify-content: space-between;
  width: 124px;
}

.collapse {
  align-self: flex-end;
  flex: 1;
  height: 32px;
  padding-left: 8px;
}

/* Formula bar */
.formula-bar {
  display: flex;
  align-items: center;
  height: 41px;
  margin: 13px 10px 10px;
}

.name-box, .fx-box, .formula {
  display: flex;
  align-items: center;
  height: 41px;
  border: 1px solid #dcdcdc;
  border-radius: 6px;
  background-color: #fff;
}

.name-box {
  width: 152px;
  padding: 0 6px 0 7px;
}

.formula-bar input {
  flex: 1;
  min-width: 0;
  padding: 0;
  border: none;
  background: none;
  font-family: "Noto Sans CJK JP", sans-serif;
  font-size: 22px;
  font-weight: 300;
}

.dots {
  margin: 0 13px 0 13px;
}

.fx-box {
  justify-content: space-between;
  width: 128px;
  padding: 0 3px 0 10px;
}

.fx {
  font-family: "Liberation Serif", serif;
  font-size: 25px;
  font-style: italic;
  font-weight: bold;
}

.pale {
  margin-left: -8px;
  color: #aaa;
}

.formula {
  flex: 1;
  margin-left: 7px;
  padding-right: 6px;
}

/* Worksheet */
.sheet {
  display: flex;
  flex: 1;
  min-height: 0;
  overflow: hidden;
}

.sheet table {
  flex: 1;
  align-self: flex-start;
  table-layout: fixed;
  width: 100%;
  border-collapse: separate;
  border-spacing: 0;
  color: #111;
  font-family: "Noto Sans CJK JP", sans-serif;
  font-feature-settings: normal;
}

.c-head { width: 46px; }
.c-a { width: 66px; }
.c-b { width: 370px; }
.c-c { width: 146px; }
.c-d { width: 353px; }
.c-e { width: 141px; }
.c-std { width: 104px; }

.sheet tr {
  height: 36px;
}

.sheet th, .sheet td {
  padding: 0 4px;
  line-height: 30px;
  white-space: nowrap;
  overflow: hidden;
}

.sheet thead th {
  padding-bottom: 9px;
  border-right: 1px solid #ddd;
  border-bottom: 1px solid #aaa;
  font-size: 17px;
  font-weight: normal;
  line-height: 22px;
  color: #555;
}

.sheet thead .corner {
  padding: 4px 4px 0 14px;
  border-right-color: #aaa;
  border-bottom-color: #ddd;
}

.sheet thead .current {
  border-bottom: 2px solid #107c41;
  background-color: #e0e0e0;
  color: #107c41;
}

.sheet tbody th {
  border-right: 1px solid #aaa;
  border-bottom: 1px solid #ddd;
  font-family: "Noto Sans", sans-serif;
  font-size: 17px;
  font-weight: normal;
  color: #555;
}

.sheet tbody .current {
  border-right: 2px solid #107c41;
  background-color: #e0e0e0;
  color: #107c41;
}

.sheet td {
  padding-bottom: 3px;
  border-right: 1px solid #e0e0e0;
  border-bottom: 1px solid #e0e0e0;
  background-color: #fff;
  font-size: 22px;
  font-weight: 300;
}

.sheet td:nth-child(2) {
  padding-right: 3px;
  text-align: right;
}

.sheet td:nth-child(-n+6) {
  border-bottom-color: #45b0e1;
}

.sheet td:nth-child(6) {
  border-right-color: #45b0e1;
}

.band td:nth-child(-n+6) {
  background-color: #c0e6f5;
}

.band td:nth-child(-n+5) {
  border-right-color: #c0e6f5;
}

.table-head td:nth-child(-n+6) {
  padding: 0 0 0 4px;
  border-right-color: #156082;
  background-color: #156082;
  color: #fff;
  font-weight: bold;
}

.head-cell {
  display: flex;
  align-items: flex-end;
  justify-content: space-between;
  height: 34px;
}

.head-cell span {
  padding-bottom: 5px;
}

.filter {
  display: flex;
  align-items: center;
  justify-content: center;
  flex: none;
  width: 25px;
  height: 25px;
  padding: 0;
  border: 1px solid #aaa;
  background-color: #f8f8f8;
}

.filter::before {
  content: "";
  border: 5px solid transparent;
  border-top: 6px solid #666;
  border-bottom: none;
}

.sheet .selected {
  position: relative;
  overflow: visible;
  outline: 2px solid #107c41;
}

.selected::after {
  content: "";
  position: absolute;
  right: -4px;
  bottom: -4px;
  width: 7px;
  height: 7px;
  border: 1px solid #fff;
  background-color: #107c41;
}

.scrollbar {
  display: flex;
  flex-direction: column;
  align-items: center;
  gap: 7px;
  width: 24px;
  margin: 0 2px 0 4px;
  padding-top: 7px;
  border-radius: 12px 12px 0 0;
  background-color: #f6f6f6;
}

.thumb {
  flex: 1;
  width: 12px;
  border-radius: 6px 6px 0 0;
  background-color: #707070;
}

/* Find and replace dialog */
.dialog {
  position: absolute;
  left: 49px;
  top: 325px;
  width: 759px;
  border: 1px solid #777;
  background-color: #efefef;
  box-shadow: 2px 4px 14px rgba(0, 0, 0, 0.35);
  color: #111;
  font-size: 18px;
}

.dialog-title {
  display: flex;
  align-items: center;
  gap: 54px;
  height: 44px;
  padding: 0 26px 0 12px;
  background-color: #fff;
  font-size: 17px;
}

.dialog-title span {
  flex: 1;
}

.dialog-tabs {
  display: flex;
  align-items: flex-end;
  padding: 12px 10px 0;
}

.dialog-tabs button {
  width: 89px;
  height: 34px;
  padding: 0 4px 0 0;
  border: 1px solid #dcdcdc;
  border-bottom: none;
  background-color: #f0f0f0;
}

.dialog-tabs .active {
  width: 97px;
  height: 37px;
  margin-bottom: -1px;
  border-right: none;
  background-color: #fff;
  z-index: 1;
}

.panel {
  display: flex;
  flex-direction: column;
  margin: 0 12px 0 10px;
  height: 167px;
  border: 1px solid #dcdcdc;
  background-color: #fff;
}

.field {
  position: relative;
  display: flex;
  align-items: center;
  padding: 16px 12px 0 14px;
}

.field label {
  width: 173px;
}

.find-box {
  display: flex;
  align-items: center;
  flex: 1;
  height: 36px;
  padding: 1px;
  border: 1px solid #999;
}

.find-box input {
  flex: 1;
  min-width: 0;
  border: none;
  outline: none;
}

.caret {
  width: 1px;
  height: 24px;
  margin-left: 4px;
  background-color: #000;
}

.find-box button {
  display: flex;
  align-items: center;
  justify-content: center;
  width: 26px;
  height: 32px;
  padding: 0;
  border: 1px solid #aaa;
  background-color: #e1e1e1;
}

.dlg-btn {
  height: 39px;
  padding: 0;
  border: 1px solid #adadad;
  background-color: #e1e1e1;
}

.options {
  align-self: flex-end;
  width: 155px;
  margin: 57px 13px 0 0;
}

.dialog-actions {
  display: flex;
  justify-content: flex-end;
  padding: 14px 11px 13px;
}

.all {
  width: 132px;
}

.default {
  width: 124px;
  margin: 0 31px 0 16px;
  border: 2px solid #0078d7;
}

.close {
  width: 124px;
}
```
